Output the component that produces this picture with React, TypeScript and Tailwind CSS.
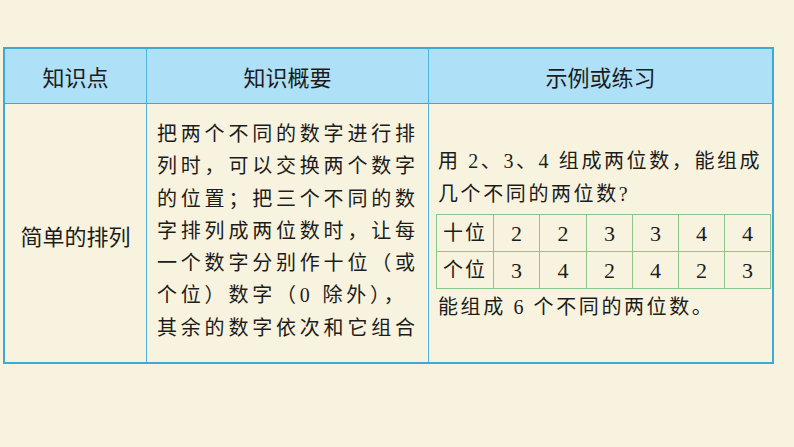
import React from "react";

const sans = { fontFamily: '"Noto Sans CJK SC", "Noto Sans", sans-serif' };
const serif = { fontFamily: '"Liberation Serif", "Noto Sans CJK SC", serif' };

const col2Lines = [
  "把两个不同的数字进行排",
  "列时，可以交换两个数字",
  "的位置；把三个不同的数",
  "字排列成两位数时，让每",
  "一个数字分别作十位（或",
  "个位）数字（0 除外），",
  "其余的数字依次和它组合",
];

const tens = ["2", "2", "3", "3", "4", "4"];
const ones = ["3", "4", "2", "4", "2", "3"];

export default function App() {
  return (
    <div className="w-[794px] h-[447px] bg-[#f8f3de] pt-[47px] pl-[3px] overflow-hidden text-[#1c1c1c]">
      <div className="w-[771px] border-2 border-[#3fa9d6] grid grid-cols-[142px_282px_343px]">
        {/* header */}
        <div className="h-[55px] bg-[#aee0f8] flex items-center justify-center text-[22px] border-r border-[#4fb3dc] border-b border-b-[#3fa9d6]" style={sans}>
          知识点
        </div>
        <div className="h-[55px] bg-[#aee0f8] flex items-center justify-center text-[22px] border-r border-[#4fb3dc] border-b border-b-[#3fa9d6]" style={sans}>
          知识概要
        </div>
        <div className="h-[55px] bg-[#aee0f8] flex items-center justify-center text-[22px] border-b border-[#3fa9d6]" style={sans}>
          示例或练习
        </div>
        {/* body */}
        <div className="h-[258px] flex items-center justify-center text-[22px] border-r border-[#4fb3dc] pt-[4px]" style={sans}>
          简单的排列
        </div>
        <div className="h-[258px] border-r border-[#4fb3dc] pl-[10px] pt-[14px]" style={serif}>
          {col2Lines.map((l, i) => (
            <div key={i} className="h-[32.3px] leading-[32.3px] text-[20px] tracking-[3.8px] whitespace-nowrap">
              {l}
            </div>
          ))}
        </div>
        <div className="h-[258px] pl-[9px] pt-[41px]" style={serif}>
          <div className="h-[33px] leading-[33px] text-[20px] tracking-[2.6px] whitespace-nowrap">
            用 2、3、4 组成两位数，能组成
          </div>
          <div className="h-[33px] leading-[33px] text-[20px] tracking-[2.6px] whitespace-nowrap">
            几个不同的两位数?
          </div>
          <div className="mt-[3px] -ml-[2px] w-[335px] border border-[#8cc68a] grid grid-cols-[57px_46px_47px_46px_46px_46px_45px]">
            {["十位", ...tens].map((t, i) => (
              <div
                key={"t" + i}
                className={
                  "h-[37px] flex items-center justify-center border-b border-[#8cc68a] " +
                  (i < 6 ? "border-r " : "") +
                  (i === 0 ? "text-[20px] tracking-[2px]" : "text-[22px]")
                }
              >
                {t}
              </div>
            ))}
            {["个位", ...ones].map((t, i) => (
              <div
                key={"o" + i}
                className={
                  "h-[36px] flex items-center justify-center border-[#8cc68a] " +
                  (i < 6 ? "border-r " : "") +
                  (i === 0 ? "text-[20px] tracking-[2px]" : "text-[22px]")
                }
              >
                {t}
              </div>
            ))}
          </div>
          <div className="mt-[2px] h-[33px] leading-[33px] text-[20px] tracking-[2.6px] whitespace-nowrap">
            能组成 6 个不同的两位数。
          </div>
        </div>
      </div>
    </div>
  );
}
